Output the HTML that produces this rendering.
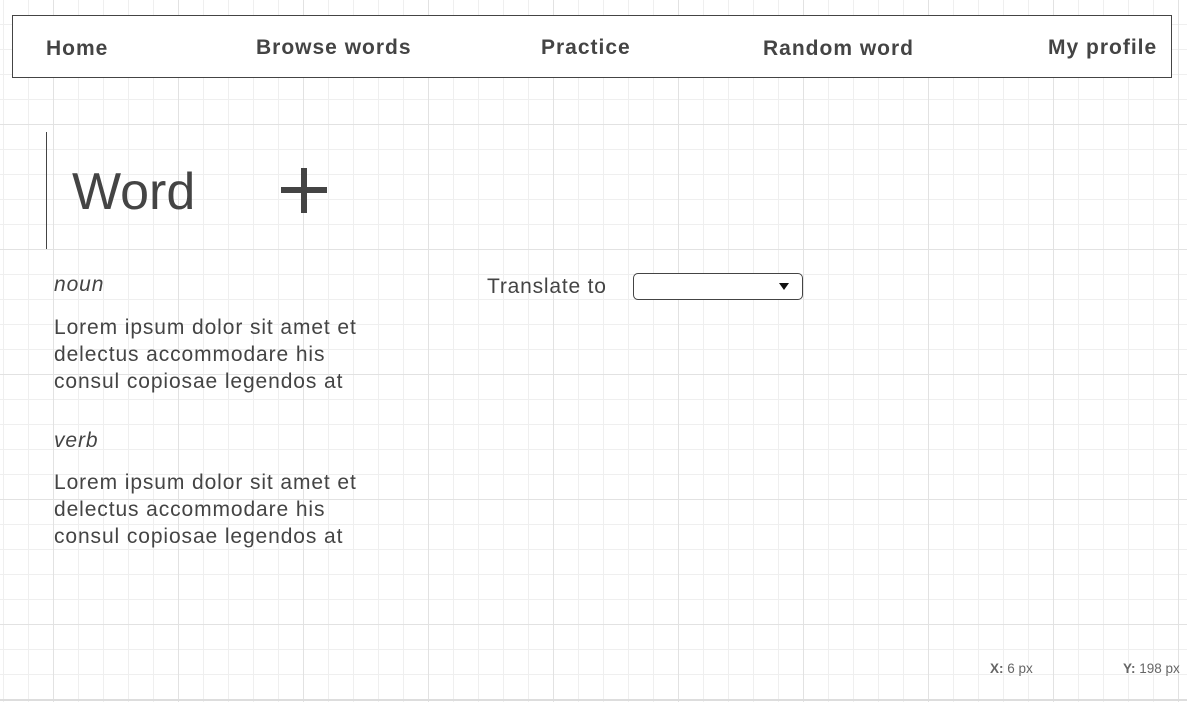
<!DOCTYPE html>
<html><head><style>
html,body{margin:0;padding:0;}
body{width:1187px;height:702px;position:relative;overflow:hidden;background-color:#fff;
font-family:"Liberation Sans",sans-serif;color:#444;
background-image:
linear-gradient(to right,#e2e2e2 1px,transparent 1px),
linear-gradient(to bottom,#e2e2e2 1px,transparent 1px),
linear-gradient(to right,#efefef 1px,transparent 1px),
linear-gradient(to bottom,#efefef 1px,transparent 1px);
background-size:125px 125px,125px 125px,25px 25px,25px 25px;
background-position:53px 0,0 124px,3px 0,0 24px;}
.a{position:absolute;white-space:nowrap;}
.nav{position:absolute;left:12px;top:15px;width:1158px;height:61px;border:1px solid #444;background:#fff;}
.n{position:absolute;font-weight:bold;font-size:21px;color:#444;letter-spacing:1px;}
.t{font-size:21px;line-height:27px;letter-spacing:0.9px;}
.i{font-style:italic;font-size:21px;letter-spacing:0.9px;}
</style></head><body>
<div class="nav"></div>
<div class="n a" style="left:46px;top:37px">Home</div>
<div class="n a" style="left:256px;top:36px">Browse words</div>
<div class="n a" style="left:541px;top:36px">Practice</div>
<div class="n a" style="left:763px;top:37px">Random word</div>
<div class="n a" style="left:1048px;top:36px">My profile</div>
<div class="a" style="left:46px;top:132px;width:1px;height:117px;background:#444"></div>
<div class="a" style="left:72px;top:161px;font-size:52px;line-height:62px">Word</div>
<div class="a" style="left:281px;top:187px;width:46px;height:6px;background:#444"></div>
<div class="a" style="left:301px;top:168px;width:6px;height:45px;background:#444"></div>
<div class="a i" style="left:54px;top:273px">noun</div>
<div class="a t" style="left:54px;top:314px">Lorem ipsum dolor sit amet et<br>delectus accommodare his<br>consul copiosae legendos at</div>
<div class="a i" style="left:54px;top:429px">verb</div>
<div class="a t" style="left:54px;top:469px">Lorem ipsum dolor sit amet et<br>delectus accommodare his<br>consul copiosae legendos at</div>
<div class="a" style="left:487px;top:275px;font-size:21px;letter-spacing:0.8px">Translate to</div>
<div class="a" style="left:633px;top:273px;width:168px;height:25px;border:1px solid #444;border-radius:5px;background:#fff"></div>
<div class="a" style="left:779px;top:283px;width:0;height:0;border-left:5px solid transparent;border-right:5px solid transparent;border-top:7px solid #111"></div>
<div class="a" style="left:990px;top:661px;font-size:13.5px;color:#666"><b>X:</b> 6 px</div>
<div class="a" style="left:1123px;top:661px;font-size:13.5px;color:#666"><b>Y:</b> 198 px</div>
<div class="a" style="left:0;top:699px;width:1187px;height:2px;background:#ddd"></div>
</body></html>
